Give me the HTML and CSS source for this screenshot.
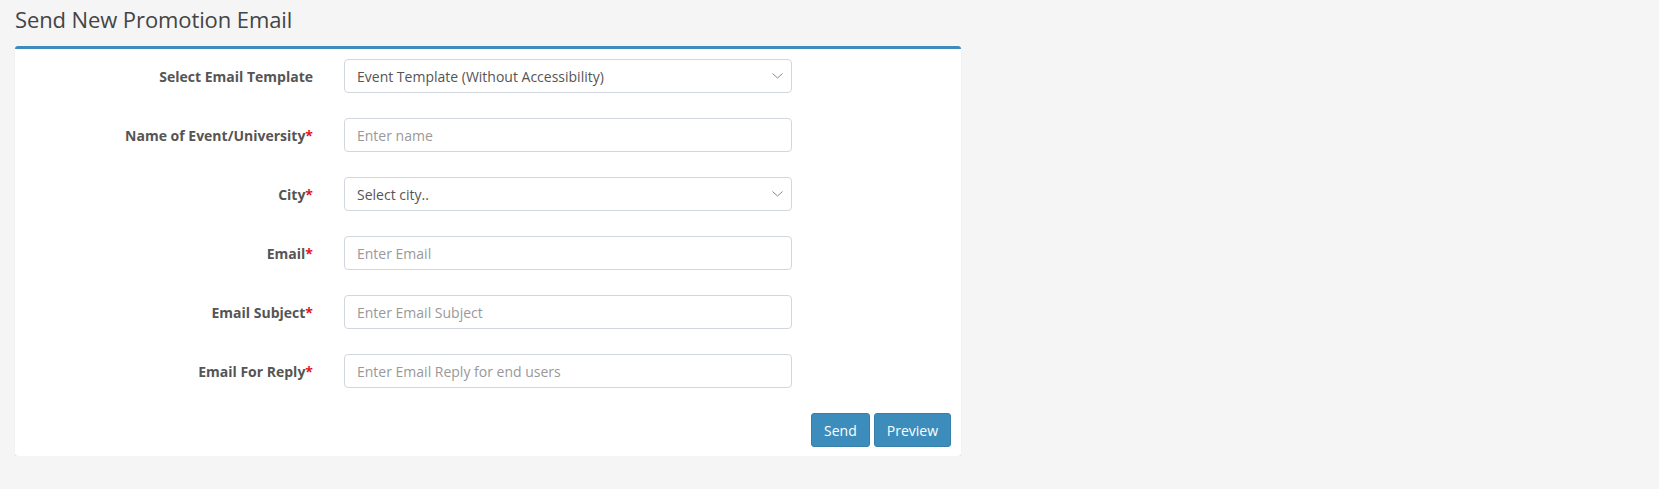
FILE: index.html
```html
<!DOCTYPE html>
<html>
<head>
<meta charset="utf-8">
<link rel="stylesheet" href="styles.css">
</head>
<body>
<div class="page">
  <h1 class="title">Send New Promotion Email</h1>
  <div class="box">
    <form class="form">
      <div class="row">
        <label class="label">Select Email Template</label>
        <div class="field select">
          <span class="value">Event Template (Without Accessibility)</span>
          <svg class="chev" width="11" height="6" viewBox="0 0 11 6"><path d="M0.5 0.5 L5.5 5 L10.5 0.5" fill="none" stroke="#888" stroke-width="1"/></svg>
        </div>
      </div>
      <div class="row">
        <label class="label">Name of Event/University<span class="req">*</span></label>
        <div class="field"><span class="ph">Enter name</span></div>
      </div>
      <div class="row">
        <label class="label">City<span class="req">*</span></label>
        <div class="field select">
          <span class="value">Select city..</span>
          <svg class="chev" width="11" height="6" viewBox="0 0 11 6"><path d="M0.5 0.5 L5.5 5 L10.5 0.5" fill="none" stroke="#888" stroke-width="1"/></svg>
        </div>
      </div>
      <div class="row">
        <label class="label">Email<span class="req">*</span></label>
        <div class="field"><span class="ph">Enter Email</span></div>
      </div>
      <div class="row">
        <label class="label">Email Subject<span class="req">*</span></label>
        <div class="field"><span class="ph">Enter Email Subject</span></div>
      </div>
      <div class="row">
        <label class="label">Email For Reply<span class="req">*</span></label>
        <div class="field"><span class="ph">Enter Email Reply for end users</span></div>
      </div>
      <div class="actions">
        <button type="button" class="btn">Send</button>
        <button type="button" class="btn">Preview</button>
      </div>
    </form>
  </div>
</div>
</body>
</html>
```

FILE: styles.css
```css
html, body {
  margin: 0;
  padding: 0;
  background: #f5f5f5;
  font-family: "Open Sans", "Liberation Sans", sans-serif;
  color: #333;
}
.page {
  padding: 0 0 0 15px;
  width: 946px;
}
.title {
  margin: 0;
  padding: 3px 0 0 0;
  height: 43px;
  font-size: 22px;
  font-weight: 400;
  color: #444;
  line-height: 32px;
  letter-spacing: -0.1px;
}
.box {
  background: #fff;
  border-top: 3px solid #3c8dbc;
  border-radius: 3px;
  box-shadow: 0 1px 1px rgba(0,0,0,0.12);
  padding: 10px 10px 9px 10px;
}
.form {
  display: flex;
  flex-direction: column;
  gap: 25px;
}
.row {
  display: flex;
  align-items: center;
  height: 34px;
}
.label {
  width: 319px;
  text-align: right;
  font-size: 14px;
  font-weight: 700;
  color: #555;
  padding-right: 31px;
  box-sizing: border-box;
  flex: none;
}
.req {
  color: #e0151c;
}
.field {
  width: 448px;
  height: 34px;
  box-sizing: border-box;
  border: 1px solid #d2d6de;
  border-radius: 4px;
  display: flex;
  align-items: center;
  padding: 0 12px;
  font-size: 14px;
  color: #555;
}
.ph {
  color: #999;
}
.select {
  justify-content: space-between;
  padding-right: 8px;
}
.chev {
  display: block;
}
.actions {
  display: flex;
  justify-content: flex-end;
  gap: 4px;
}
.btn {
  height: 34px;
  background: #3c8dbc;
  border: 1px solid #367fa9;
  border-radius: 3px;
  color: #fff;
  font-family: "Open Sans", "Liberation Sans", sans-serif;
  font-size: 14px;
  padding: 0 12px;
}
```
